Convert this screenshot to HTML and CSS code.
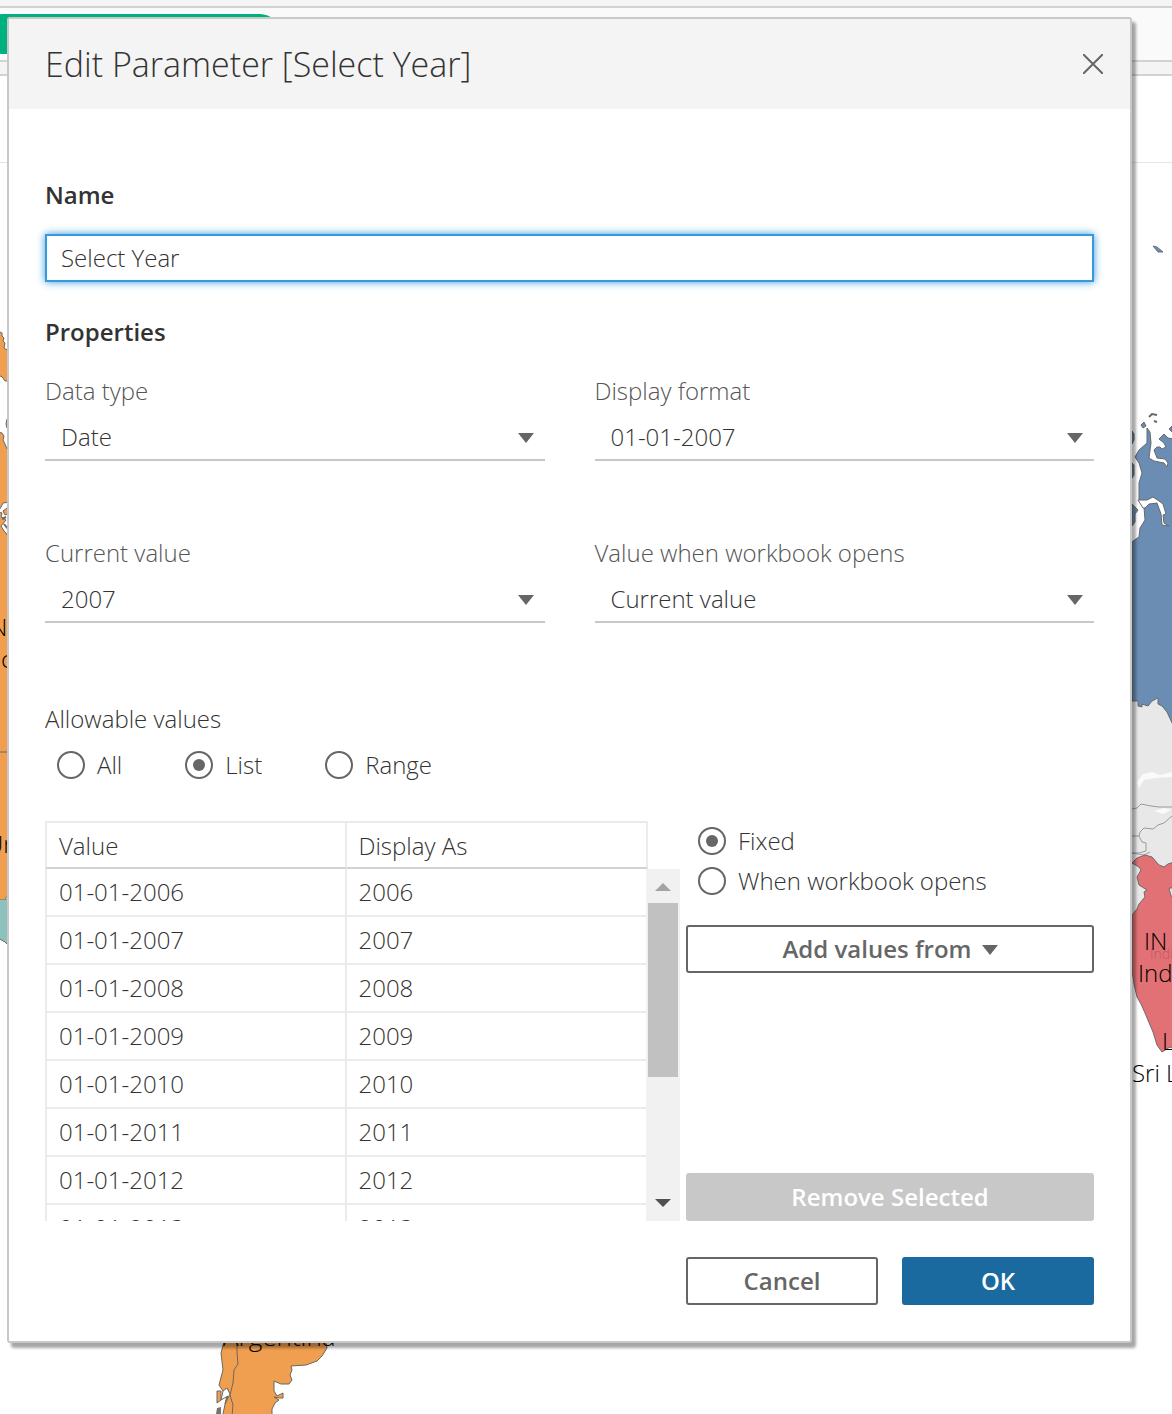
FILE: index.html
```html
<!DOCTYPE html>
<html lang="en">
<head>
<meta charset="utf-8">
<meta name="viewport" content="width=device-width, initial-scale=1">
<title>Edit Parameter [Select Year]</title>
<link rel="stylesheet" href="styles.css">
</head>
<body>
<div class="workspace">
  <div class="backdrop" aria-hidden="true">
    <div class="toolbar"></div>
    <div class="shelf"><span class="pill"></span></div>
    <div class="divider"></div>
    <div class="sheet-title"></div>

    <svg class="map map-west" viewBox="0 0 8 1414" width="8" height="1414">
      <g fill="#f09f50" stroke="#6b6660" stroke-width="1">
        <path d="M-2 331 L2 333 L2 336 L4 338 L3 341 L5 343 L4 348 L7 350 L10 353 V381 L5 381 L3 378 L1 376 L-2 377 Z"/>
        <path d="M10 417 L7 419 L6 424 L7 428 L10 430 Z"/>
        <path d="M-2 432 L2 433 L4 436 L3 440 L5 444 L7 449 L10 453 V897 H6 V900 H-2 Z"/>
      </g>
      <path d="M-2 512 L1 507 L3 503 L10 502 V540 L6 533 L4 531 L1 526 L6 520 L1 517 L2 513 Z" fill="#fff" stroke="#6b6660"/>
      <path d="M3 511 L7 508 L10 513 L5 515 Z" fill="#f09f50" stroke="#6b6660"/>
      <path d="M2 519 L6 517 M4 524 L8 529" stroke="#6b6660" stroke-width="2"/>
      <path d="M-2 900 H6 V897 H10 V947 L5 942 L-2 938 Z" fill="#8dc1bc"/>
      <path d="M-2 938 L5 942 L10 947 M-2 752 H10" fill="none" stroke="#6b6660"/>
      <text x="-10" y="636">N</text>
      <text x="1" y="668">c</text>
      <text x="-14" y="853">Ur</text>
    </svg>

    <svg class="map map-east" viewBox="1132 0 40 1414" width="40" height="1414">
      <path d="M1153 246 L1157 247 L1163 252 L1158 252 Z" fill="#6b8db3" stroke="#67717b"/>
      <path d="M1132 700 L1172 700 V870 L1150 915 H1132 Z" fill="#e8e8e8"/>
      <path d="M1132 542 L1136 539 L1139 537 L1140 528 L1145 520 L1144 507 L1139 500 V483 L1142 473 L1139 463 L1135 457 L1139 450 L1147 443 V428 L1150 432 L1151 443 L1149 458 L1154 461 L1164 463 L1167 467 L1168 463 L1165 459 L1157 458 L1154 450 L1157 447 L1160 447 L1162 449 L1166 447 L1164 443 L1159 439 L1164 434 L1168 438 L1174 439 V727 L1167 712 L1162 706 L1158 704 L1158 698 L1152 701 L1148 706 L1142 704 L1142 707 L1138 706 L1138 701 L1132 701 Z" fill="#6b8db3" stroke="#666a6e"/>
      <path d="M1138 500 L1147 500 L1153 497 L1159 501 L1163 504 L1166 514 L1163 515 L1164 523 L1169 526 L1162 525 L1161 514 L1157 503 L1149 504 L1145 508 L1143 508 Z" fill="#fff" stroke="#666a6e"/>
      <path d="M1132 431 V444 L1134 440 V434 Z M1132 463 V478 L1134 475 V465 Z M1132 504 V526 L1135 522 L1135 514 L1138 510 Z M1141 425 L1144 422 L1146 426 L1143 428 Z M1172 426 L1169 429 L1172 432 Z" fill="#6b8db3" stroke="#666a6e"/>
      <path d="M1149 417 L1152 414 L1157 415 M1154 421 L1157 422" fill="none" stroke="#666a6e" stroke-width="2"/>
      <path d="M1139 788 L1137 782 L1143 774 L1152 772 L1160 775 L1172 772 V777 L1155 778 L1144 780 Z M1154 811 L1164 808 L1171 810 L1163 814 Z" fill="#fafafa"/>
      <path d="M1132 809 L1137 808 L1141 804 L1151 806 L1159 807 L1172 807 M1172 816 L1164 823 L1158 825 L1153 829 L1144 828 L1140 832 L1139 836 H1132 M1139 836 L1142 842 L1146 843 L1146 851 L1139 853 H1132 M1132 853 L1144 855 L1150 852" fill="none" stroke="#9b9b9b"/>
      <path d="M1132 863 L1137 858 L1145 855 L1152 857 L1159 865 L1164 867 L1168 864 L1174 862 V1049 L1170 1047 L1162 1052 L1157 1045 L1153 1032 L1145 1013 L1141 1004 L1137 997 L1134 984 L1132 970 V915 L1137 909 L1139 904 L1145 897 L1144 892 L1147 890 L1139 885 L1137 877 L1141 870 L1139 867 Z" fill="#e27175" stroke="#71686a"/>
      <path d="M1174 888 L1169 888 L1171 896 L1174 897 Z" fill="#e8e8e8" stroke="#71686a"/>
      <text class="ghost" x="1150" y="959">India</text>
      <text x="1144" y="950">IN</text>
      <text x="1138" y="982">India</text>
      <text x="1162" y="1050">LK</text>
      <text x="1132" y="1082">Sri La</text>
    </svg>

    <svg class="map map-south" viewBox="200 1330 160 84" width="160" height="84">
      <g fill="#f09f50" stroke="#6b6660">
        <path d="M225 1338 L221 1353 L223 1370 L219 1385 L223 1391 L228 1389 L227 1395 L223 1414 V1418 H272 V1409 L275 1403 L279 1400 L274 1397 L279 1398 L283 1398 L283 1393 L277 1396 L274 1391 V1381 L281 1384 L289 1384 L292 1380 L290 1375 L292 1370 L291 1366 L306 1365 L317 1361 L322 1356 L327 1348 L325 1338 Z"/>
        <path d="M217 1391 L221 1391 V1400 L217 1403 Z"/>
        <path d="M237 1338 V1352 L238 1364 L234 1370 L233 1383 L230 1395 L233 1405 L232 1416" fill="none"/>
      </g>
      <path d="M223 1391 L227 1388 L230 1394 L225 1404 L228 1396 L221 1400 Z" fill="#fff" stroke="#6b6660"/>
      <path d="M216 1414 L217 1408 L221 1407 L221 1414 Z" fill="#77736e"/>
      <text class="country" x="223" y="1346">Argentina</text>
    </svg>
  </div>

  <form class="dialog" role="dialog" aria-labelledby="dialog-title">
    <header class="dialog-header">
      <h1 id="dialog-title">Edit Parameter [Select Year]</h1>
      <button class="close" type="button" aria-label="Close">
        <svg viewBox="0 0 20 20" width="20" height="20"><path d="M0 0 L20 20 M20 0 L0 20" stroke="#666" stroke-width="2" fill="none"/></svg>
      </button>
    </header>

    <div class="dialog-body">
      <label class="heading" for="name">Name</label>
      <input class="name-input" id="name" type="text" value="Select Year">

      <h2 class="heading properties-heading">Properties</h2>
      <div class="properties">
        <div class="field">
          <label for="data-type">Data type</label>
          <div class="select">
            <select id="data-type"><option>Date</option></select>
            <svg class="arrow" viewBox="0 0 16 10" width="16" height="10"><path d="M0 0 H16 L8 10 Z"/></svg>
          </div>
        </div>
        <div class="field">
          <label for="format">Display format</label>
          <div class="select">
            <select id="format"><option>01-01-2007</option></select>
            <svg class="arrow" viewBox="0 0 16 10" width="16" height="10"><path d="M0 0 H16 L8 10 Z"/></svg>
          </div>
        </div>
        <div class="field">
          <label for="current">Current value</label>
          <div class="select">
            <select id="current"><option>2007</option></select>
            <svg class="arrow" viewBox="0 0 16 10" width="16" height="10"><path d="M0 0 H16 L8 10 Z"/></svg>
          </div>
        </div>
        <div class="field">
          <label for="on-open">Value when workbook opens</label>
          <div class="select">
            <select id="on-open"><option>Current value</option></select>
            <svg class="arrow" viewBox="0 0 16 10" width="16" height="10"><path d="M0 0 H16 L8 10 Z"/></svg>
          </div>
        </div>
      </div>

      <fieldset class="allowable">
        <legend>Allowable values</legend>
        <div class="allowable-options">
          <label class="radio"><input type="radio" name="allowable">All</label>
          <label class="radio"><input type="radio" name="allowable" checked>List</label>
          <label class="radio"><input type="radio" name="allowable">Range</label>
        </div>
      </fieldset>

      <div class="list-area">
        <div class="list">
          <div class="list-clip">
            <table>
              <thead><tr><th scope="col">Value</th><th scope="col">Display As</th></tr></thead>
              <tbody>
                <tr><td>01-01-2006</td><td>2006</td></tr>
                <tr><td>01-01-2007</td><td>2007</td></tr>
                <tr><td>01-01-2008</td><td>2008</td></tr>
                <tr><td>01-01-2009</td><td>2009</td></tr>
                <tr><td>01-01-2010</td><td>2010</td></tr>
                <tr><td>01-01-2011</td><td>2011</td></tr>
                <tr><td>01-01-2012</td><td>2012</td></tr>
                <tr><td>01-01-2013</td><td>2013</td></tr>
              </tbody>
            </table>
          </div>
          <div class="scrollbar" aria-hidden="true">
            <svg class="scroll-arrow" viewBox="0 0 16 8" width="16" height="8"><path d="M0 8 L8 0 L16 8 Z" fill="#a3a3a3"/></svg>
            <div class="thumb"></div>
            <svg class="scroll-arrow scroll-down" viewBox="0 0 16 8" width="16" height="8"><path d="M0 0 H16 L8 8 Z" fill="#505050"/></svg>
          </div>
        </div>
        <div class="list-side">
          <label class="radio"><input type="radio" name="source" checked>Fixed</label>
          <label class="radio"><input type="radio" name="source">When workbook opens</label>
          <button class="btn add" type="button">Add values from
            <svg class="arrow" viewBox="0 0 16 10" width="16" height="10"><path d="M0 0 H16 L8 10 Z"/></svg>
          </button>
          <button class="btn btn-disabled remove" type="button" disabled>Remove Selected</button>
        </div>
      </div>

      <footer class="actions">
        <button class="btn" type="button">Cancel</button>
        <button class="btn btn-primary" type="submit">OK</button>
      </footer>
    </div>
  </form>
</div>
</body>
</html>
```
FILE: styles.css
```css
* {
  box-sizing: border-box;
}

body {
  margin: 0;
  background: #fff;
  color: #333;
  font: 300 24px/30px "Open Sans", "Noto Sans", sans-serif;
}

input,
select,
button {
  margin: 0;
  font: inherit;
  color: inherit;
}

.workspace {
  position: relative;
  display: flow-root;
}

/* Worksheet behind the dialog */
.backdrop {
  position: absolute;
  inset: 0;
  overflow: hidden;
}

.toolbar {
  height: 8px;
  background: #f4f4f4;
  border-bottom: 2px solid #d2d2d2;
}

.shelf {
  height: 54px;
  padding-top: 6px;
  background: #fafafa;
  border-bottom: 2px solid #d2d2d2;
}

.pill {
  display: block;
  width: 284px;
  height: 40px;
  margin-left: -4px;
  border-radius: 20px;
  border-top-left-radius: 6px;
  border-bottom-left-radius: 6px;
  background: #00b180;
}

.divider {
  height: 14px;
  background: #f4f4f4;
  border-bottom: 2px solid #d2d2d2;
}

.sheet-title {
  height: 87px;
  border-bottom: 1px solid #e5e5e5;
}

.map {
  position: absolute;
  fill: #000;
}

.map-west {
  top: 0;
  left: 0;
}

.map-east {
  top: 0;
  right: 0;
}

.map-south {
  bottom: 0;
  left: 200px;
}

.ghost {
  font-size: 14px;
  fill: #c5585f;
}

.country {
  font-size: 26px;
}

/* Dialog */
.dialog {
  position: relative;
  margin: 17px 40px 71px 7px;
  border: 2px solid #c8c8c8;
  border-radius: 3px;
  background: #fff;
  box-shadow: 4px 5px 3px rgba(0, 0, 0, 0.35);
}

.dialog-header {
  display: flex;
  align-items: center;
  justify-content: space-between;
  min-height: 90px;
  padding: 0 27px 0 36px;
  background: #f4f4f4;
}

h1 {
  margin: 0;
  font-size: 34px;
  font-weight: 300;
  line-height: 40px;
}

.close {
  display: flex;
  padding: 0;
  border: 0;
  background: none;
}

.dialog-body {
  padding: 71px 36px 36px;
}

.heading {
  display: block;
  margin: 0;
  font-size: 24px;
  font-weight: 600;
}

.name-input {
  display: block;
  width: 100%;
  height: 48px;
  margin-top: 24px;
  padding: 0 14px 2px;
  border: 2px solid #3599dc;
  outline: 0;
  background: #fff;
  box-shadow: 0 0 8px #3599dc;
}

.properties-heading {
  margin-top: 35px;
}

.properties {
  display: grid;
  grid-template-columns: 1fr 1fr;
  gap: 77px 50px;
  margin-top: 29px;
}

.field {
  display: grid;
  gap: 8px;
  color: #555;
}

.select {
  display: grid;
  align-items: center;
  border-bottom: 2px solid #c8c8c8;
  color: #333;
}

.select select,
.select .arrow {
  grid-area: 1 / 1;
}

.select select {
  width: 100%;
  height: 45px;
  padding: 0 40px 0 16px;
  border: 0;
  appearance: none;
  background: none;
}

.arrow {
  margin-top: 2px;
  fill: #666;
}

.select .arrow {
  justify-self: end;
  margin-right: 11px;
  pointer-events: none;
}

.allowable {
  margin: 81px 0 0;
  padding: 0;
  border: 0;
}

legend {
  padding: 0;
}

.allowable-options {
  display: flex;
  gap: 63px;
  margin: 16px 0 0 12px;
}

.radio {
  display: flex;
  align-items: center;
  gap: 12px;
}

.radio input {
  display: grid;
  place-items: center;
  width: 28px;
  height: 28px;
  border: 2px solid #666;
  border-radius: 50%;
  appearance: none;
}

.radio input:checked::before {
  content: "";
  width: 12px;
  height: 12px;
  border-radius: 50%;
  background: #666;
}

/* List of allowable values */
.list-area {
  display: grid;
  grid-template-columns: 1fr 408px;
  gap: 6px;
  margin-top: 41px;
}

.list {
  display: grid;
  grid-template-columns: 1fr 34px;
  height: 400px;
}

.list-clip {
  overflow: hidden;
  margin-right: -2px;
}

table {
  width: 100%;
  table-layout: fixed;
  border-spacing: 0;
  border-collapse: separate;
}

th,
td {
  height: 48px;
  padding: 0 12px;
  border: 0 solid #ebebeb;
  border-right-width: 2px;
  border-bottom-width: 2px;
  font-weight: 300;
  text-align: left;
}

th {
  padding-top: 2px;
  border-top-width: 2px;
  border-bottom-color: #d2d2d2;
}

th:first-child,
td:first-child {
  border-left-width: 2px;
}

.scrollbar {
  display: flex;
  flex-direction: column;
  align-items: center;
  margin-top: 48px;
  padding: 14px 2px;
  background: #f1f1f1;
  z-index: 1;
}

.thumb {
  align-self: stretch;
  height: 174px;
  margin-top: 12px;
  background: #c1c1c1;
}

.scroll-down {
  margin-top: auto;
}

.list-side {
  display: flex;
  flex-direction: column;
  gap: 10px;
  padding-top: 5px;
}

.list-side .radio {
  margin-left: 12px;
}

.btn {
  display: flex;
  align-items: center;
  justify-content: center;
  gap: 10px;
  height: 48px;
  padding: 0 16px;
  border: 2px solid #666;
  border-radius: 3px;
  background: #fff;
  color: #666;
  font-weight: 600;
}

.add {
  margin-top: 19px;
}

.remove {
  margin-top: auto;
}

.btn-disabled {
  border-color: #c8c8c8;
  background: #c8c8c8;
  color: #fff;
}

.btn-primary {
  border-color: #1a699f;
  background: #1a699f;
  color: #fff;
}

.actions {
  display: grid;
  grid-template-columns: 192px 192px;
  justify-content: end;
  gap: 24px;
  margin-top: 36px;
}
```
